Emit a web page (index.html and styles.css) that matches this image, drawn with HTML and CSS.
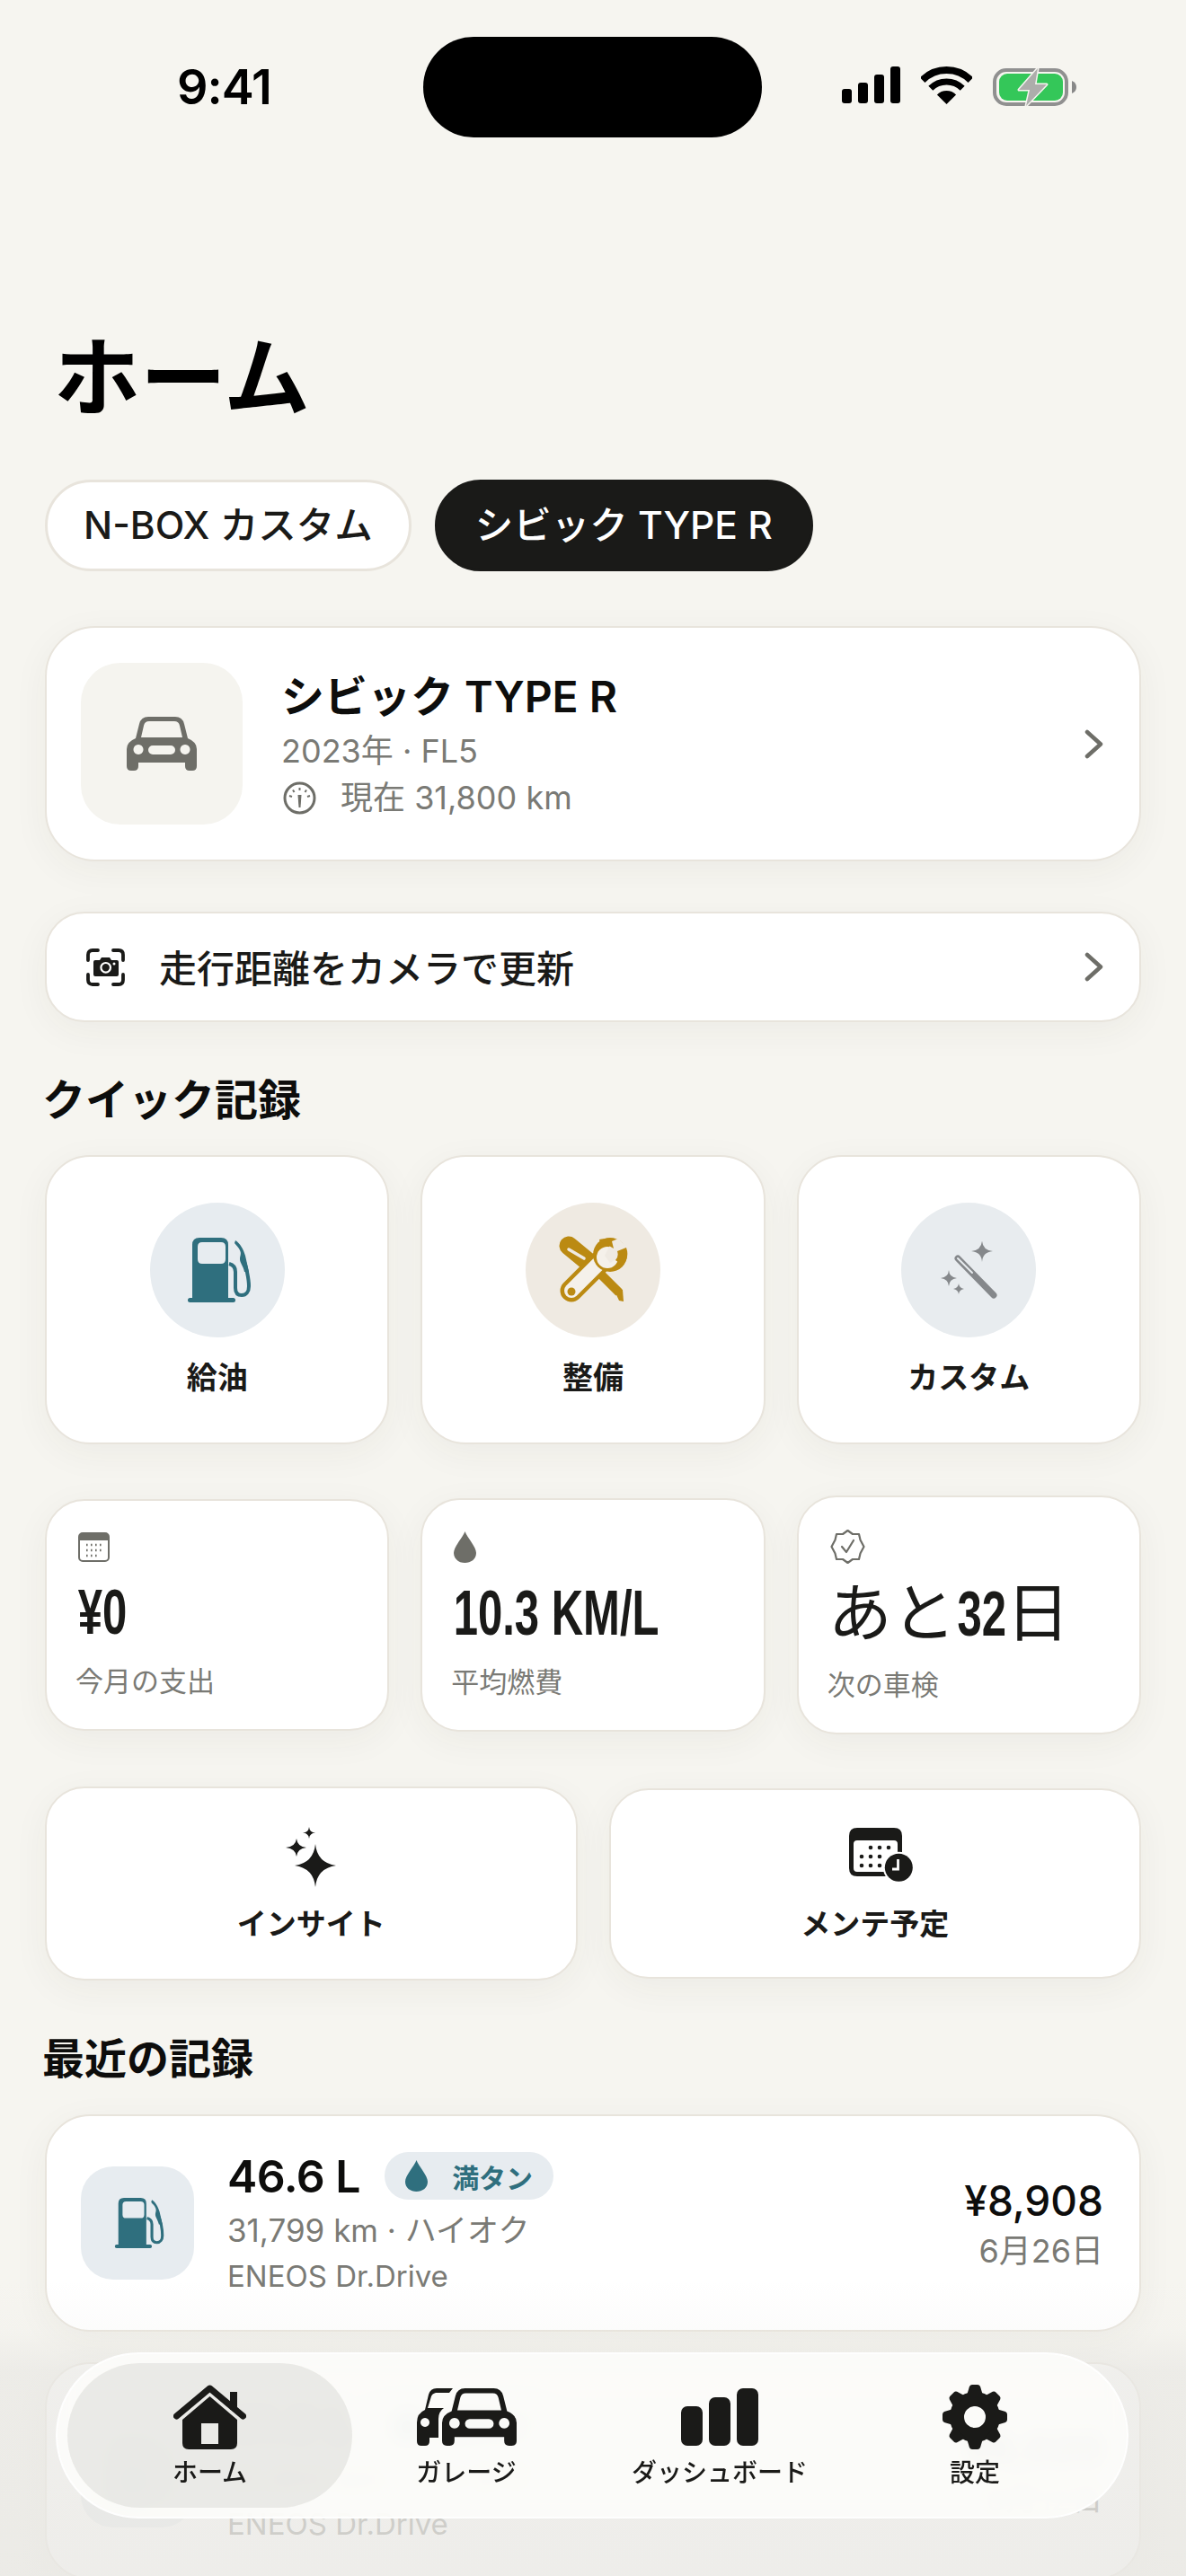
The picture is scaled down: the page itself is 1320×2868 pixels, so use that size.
FILE: index.html
```html
<!DOCTYPE html>
<html lang="ja">
<head>
    <meta charset="UTF-8">
    <meta name="viewport" content="width=device-width, initial-scale=1.0">
    <title>ホーム</title>
    <link rel="stylesheet" href="styles.css">
</head>
<body>
    <svg class="defs" width="0" height="0">
        <symbol id="car" viewBox="0 0 78 60">
            <path fill-rule="evenodd" d="M10 24 L14 8 Q16 0 24 0 H54 Q62 0 64 8 L68 24 Q78 28 78 36 V55 Q78 60 73 60 H70 Q65 60 65 55 V51 H13 V55 Q13 60 8 60 H5 Q0 60 0 55 V36 Q0 28 10 24Z M16 23 H62 L59 10 Q58 5 53 5 H25 Q20 5 19 10Z M13 31 a5.5 5.5 0 1 0 .01 0Z M65 31 a5.5 5.5 0 1 0 .01 0Z M29 32 a4.5 4.5 0 0 0 0 10 H49 a4.5 4.5 0 0 0 0 -10Z"/>
        </symbol>
        <symbol id="pump" viewBox="-6 0 78 72">
            <path fill-rule="evenodd" d="M5 69 V8 Q5 0 13 0 H37 Q45 0 45 8 V69Z M16 5 Q11 5 11 10 V24 Q11 29 16 29 H37 Q42 29 42 24 V10 Q42 5 37 5Z"/>
            <rect y="67" width="53" height="5" rx="2.5"/>
            <path class="pump-hose" d="M46 29 C50 30 53 33 53 38 V56 C53 62 56 64 60 64 C65 64 68 60 68 54 C68 46 65 32 62 24"/>
            <path d="M53 3 C58 6 62 13 64 20 L68 38 L63 38 C62 32 58 28 58 24 C58 20 60 18 58 14 C57 11 54 9 52 6Z"/>
        </symbol>
        <symbol id="chevron" viewBox="0 0 21 33">
            <path d="M3 3 L18 16.5 L3 30" fill="none" stroke="#6e6e68" stroke-width="4.5" stroke-linecap="round" stroke-linejoin="round"/>
        </symbol>
        <symbol id="drop" viewBox="0 0 25 35">
            <path d="M12.5 0 C15 7 25 17 25 24 C25 31 19 35 12.5 35 C6 35 0 31 0 24 C0 17 10 7 12.5 0Z"/>
        </symbol>
    </svg>

    <div class="screen">
        <div class="status-bar">
            <div class="status-time">9:41</div>
            <div class="island"></div>
            <div class="status-icons">
                <svg width="65" height="41" viewBox="0 0 65 41">
                    <rect y="25" width="11" height="16" rx="3"/>
                    <rect x="18" y="18" width="11" height="23" rx="3"/>
                    <rect x="36" y="9" width="11" height="32" rx="3"/>
                    <rect x="54" width="11" height="41" rx="3"/>
                </svg>
                <svg width="57" height="42" viewBox="0 0 57 42">
                    <path d="M1.63 15.13 A38 38 0 0 1 55.37 15.13" fill="none" stroke="#000" stroke-width="8"/>
                    <path d="M10.82 24.32 A25 25 0 0 1 46.18 24.32" fill="none" stroke="#000" stroke-width="7"/>
                    <path d="M17.9 31.4 A15 15 0 0 1 39.1 31.4 L28.5 42Z"/>
                </svg>
                <svg width="93" height="46" viewBox="0 0 93 46">
                    <rect x="2" y="4" width="80" height="38" rx="13" fill="none" stroke="#909090" stroke-width="4"/>
                    <rect x="7" y="8" width="71" height="30" rx="9" fill="#34c759"/>
                    <path d="M88 16 Q93 18 93 23 Q93 28 88 30Z" fill="#888"/>
                    <path d="M50 2 L29 26 H41 L37 44 L60 20 H47Z" fill="#adadab" stroke="#f6f5f0" stroke-width="3" stroke-linejoin="round" paint-order="stroke"/>
                </svg>
            </div>
        </div>

        <h1 class="page-title">ホーム</h1>

        <div class="chips">
            <div class="chip">N-BOX カスタム</div>
            <div class="chip chip-active">シビック TYPE R</div>
        </div>

        <div class="card car-card">
            <div class="car-tile">
                <svg class="car-tile-icon" width="78" height="60"><use href="#car"/></svg>
            </div>
            <div class="car-info">
                <div class="car-name">シビック TYPE R</div>
                <div class="car-sub">2023年 · FL5</div>
                <div class="car-sub car-meter">
                    <svg width="37" height="37" viewBox="0 0 37 37" fill="none" stroke="#6e6e68">
                        <circle cx="18.5" cy="18.5" r="16.5" stroke-width="3"/>
                        <path d="M18.5 7 v3 M11 9.5 l1.5 2.5 M26 9.5 l-1.5 2.5 M7 16 l3 1 M30 16 l-3 1" stroke-width="2"/>
                        <path d="M16.5 15 h4 l-1 14 h-2Z" fill="#6e6e68" stroke="none"/>
                    </svg>
                    <span>現在 31,800 km</span>
                </div>
            </div>
            <svg class="chevron" width="21" height="33"><use href="#chevron"/></svg>
        </div>

        <div class="card camera-row">
            <svg width="43" height="42" viewBox="0 0 43 42" fill="none" stroke="#1a1a18" stroke-width="3.8">
                <path d="M2 13 V7 Q2 2 7 2 H13 M30 2 H36 Q41 2 41 7 V13 M41 29 V35 Q41 40 36 40 H30 M13 40 H7 Q2 40 2 35 V29" stroke-linecap="round"/>
                <path d="M10 13 H15 L17 10 H26 L28 13 H34 Q36 13 36 15 V29 Q36 31 34 31 H10 Q8 31 8 29 V15 Q8 13 10 13Z" fill="#1a1a18" stroke="none"/>
                <circle cx="21.7" cy="21.3" r="5.3" fill="#1a1a18" stroke="#fff" stroke-width="2.2"/>
                <circle cx="31" cy="17" r="1.5" fill="#fff" stroke="none"/>
            </svg>
            <span class="camera-text">走行距離をカメラで更新</span>
            <svg class="chevron" width="21" height="33"><use href="#chevron"/></svg>
        </div>

        <h2 class="section-title section-quick">クイック記録</h2>

        <div class="quick-grid">
            <div class="card quick-card">
                <div class="quick-circle circle-blue">
                    <svg class="icon-teal" width="78" height="72"><use href="#pump"/></svg>
                </div>
                <div class="quick-label">給油</div>
            </div>
            <div class="card quick-card">
                <div class="quick-circle circle-tan">
                    <svg width="78" height="76" viewBox="0 0 78 76">
                        <path d="M12 11 L35 30" stroke="#bb8a12" stroke-width="21" stroke-linecap="round"/>
                        <path d="M12 15 L29 25" stroke="#efeae2" stroke-width="3.5" stroke-linecap="round"/>
                        <path d="M35 30 L68 63" stroke="#bb8a12" stroke-width="10"/>
                        <path d="M61 57 L72 60 L73 73 L68 72Z" fill="#bb8a12"/>
                        <path d="M15 61 L46 30" stroke="#bb8a12" stroke-width="25" stroke-linecap="round"/>
                        <path d="M15 61 L46 30" stroke="#f5f1ea" stroke-width="16" stroke-linecap="round"/>
                        <circle cx="15" cy="62" r="4.5" fill="#bb8a12"/>
                        <circle cx="58" cy="21" r="19" fill="#bb8a12"/>
                        <circle cx="55" cy="24" r="12" fill="#f5f1ea"/>
                        <path d="M52 22 L60 6 L67 3 L78 13 L75 20 L58 30Z" fill="#efeae2"/>
                        <path d="M60 6 Q54 2 46 4 L48 12 Q56 9 62 14Z M76 13 Q80 24 72 33 L64 27 Q68 23 66 17Z" fill="#bb8a12"/>
                    </svg>
                </div>
                <div class="quick-label">整備</div>
            </div>
            <div class="card quick-card">
                <div class="quick-circle circle-grey">
                    <svg width="63" height="64" viewBox="0 0 63 64">
                        <path d="M19 19 L59 60" stroke="#85888b" stroke-width="7" stroke-linecap="round"/>
                        <path d="M19 19 L35 35" stroke="#e8ecef" stroke-width="2" stroke-linecap="round"/>
                        <path d="M46 -1 Q46.5 10 58 11 Q46.5 12 46 23 Q45.5 12 34 11 Q45.5 10 46 -1Z" fill="#85888b"/>
                        <path d="M9 32 Q9.5 40 18 41 Q9.5 42 9 50 Q8.5 42 0 41 Q8.5 40 9 32Z" fill="#85888b"/>
                        <path d="M20 47 Q20.5 52 26 53 Q20.5 54 20 59 Q19.5 54 14 53 Q19.5 52 20 47Z" fill="#85888b"/>
                    </svg>
                </div>
                <div class="quick-label">カスタム</div>
            </div>
        </div>

        <div class="stats-row">
            <div class="card stat-card">
                <svg class="stat-icon" width="35" height="33" viewBox="0 0 35 33">
                    <rect x="1" y="1" width="33" height="31" rx="4" fill="#fff" stroke="#6e6e68" stroke-width="2"/>
                    <path d="M1 5 Q1 1 5 1 H30 Q34 1 34 5 V9 H1Z" fill="#6e6e68"/>
                    <path d="M9 14 h1.6 M14 14 h1.6 M19 14 h1.6 M24 14 h1.6 M9 20 h1.6 M14 20 h1.6 M19 20 h1.6 M24 20 h1.6 M9 26 h1.6 M14 26 h1.6 M19 26 h1.6" stroke="#6e6e68" stroke-width="2.4"/>
                </svg>
                <div class="stat-value"><span class="condensed">¥0</span></div>
                <div class="stat-label">今月の支出</div>
            </div>
            <div class="card stat-card">
                <svg class="stat-icon icon-grey" width="25" height="35"><use href="#drop"/></svg>
                <div class="stat-value"><span class="condensed">10.3 KM/L</span></div>
                <div class="stat-label">平均燃費</div>
            </div>
            <div class="card stat-card stat-tall">
                <svg class="stat-icon" width="39" height="40" viewBox="0 0 39 40" fill="none" stroke="#6e6e68" stroke-width="2.2" stroke-linejoin="round">
                    <path d="M19.5 2 L25 6 L32 6 L33.5 12.5 L37.5 20 L33.5 27.5 L32 34 L25 34 L19.5 38 L14 34 L7 34 L5.5 27.5 L1.5 20 L5.5 12.5 L7 6 L14 6Z"/>
                    <path d="M13 20 L18 26 L26 13" stroke-linecap="round"/>
                </svg>
                <div class="stat-value stat-mixed">あと<span class="condensed condensed-inline">32</span>日</div>
                <div class="stat-label">次の車検</div>
            </div>
        </div>

        <div class="actions-row">
            <div class="card action-card">
                <svg width="56" height="67" viewBox="0 0 56 67" fill="#1a1a18">
                    <path d="M33 19 Q35 40 56 43 Q35 46 33 67 Q31 46 10 43 Q31 40 33 19Z"/>
                    <path d="M12 13 Q13 22 23 23 Q13 24 12 33 Q11 24 0 23 Q11 22 12 13Z"/>
                    <path d="M26 0 Q26.5 6 33 6.5 Q26.5 7 26 13 Q25.5 7 19 6.5 Q25.5 6 26 0Z"/>
                </svg>
                <div class="action-label">インサイト</div>
            </div>
            <div class="card action-card action-short">
                <svg class="action-calendar" width="71" height="60" viewBox="0 0 71 60">
                    <path fill-rule="evenodd" d="M9 0 H50 Q59 0 59 9 V45 Q59 54 50 54 H9 Q0 54 0 45 V9 Q0 0 9 0Z M9 14 Q5 14 5 18 V45 Q5 49 9 49 H50 Q54 49 54 45 V18 Q54 14 50 14Z" fill="#1a1a18"/>
                    <g fill="#1a1a18">
                        <circle cx="24" cy="22" r="2.3"/><circle cx="34" cy="22" r="2.3"/><circle cx="44" cy="22" r="2.3"/>
                        <circle cx="14" cy="32" r="2.3"/><circle cx="24" cy="32" r="2.3"/><circle cx="34" cy="32" r="2.3"/>
                        <circle cx="14" cy="42" r="2.3"/><circle cx="24" cy="42" r="2.3"/><circle cx="34" cy="42" r="2.3"/>
                    </g>
                    <circle cx="55.3" cy="44.3" r="17.5" fill="#fff"/>
                    <circle cx="55.3" cy="44.3" r="15.5" fill="#1a1a18"/>
                    <path d="M54.5 35 V46 H48" fill="none" stroke="#fff" stroke-width="2.8"/>
                </svg>
                <div class="action-label">メンテ予定</div>
            </div>
        </div>

        <h2 class="section-title section-recent">最近の記録</h2>

        <div class="records">
            <div class="card record-card">
                <div class="record-tile">
                    <svg class="icon-teal" width="61" height="56"><use href="#pump"/></svg>
                </div>
                <div class="record-main">
                    <div class="record-top">
                        <span class="record-amount">46.6 L</span>
                        <span class="badge">
                            <svg class="icon-teal" width="25" height="35"><use href="#drop"/></svg>
                            満タン
                        </span>
                    </div>
                    <div class="record-sub">31,799 km · ハイオク</div>
                    <div class="record-place">ENEOS Dr.Drive</div>
                </div>
                <div class="record-right">
                    <div class="record-price">¥8,908</div>
                    <div class="record-date">6月26日</div>
                </div>
            </div>
            <div class="card record-card">
                <div class="record-tile">
                    <svg class="icon-teal" width="61" height="56"><use href="#pump"/></svg>
                </div>
                <div class="record-main">
                    <div class="record-top">
                        <span class="record-amount">41.9 L</span>
                        <span class="badge">
                            <svg class="icon-teal" width="25" height="35"><use href="#drop"/></svg>
                            満タン
                        </span>
                    </div>
                    <div class="record-sub">31,402 km · ハイオク</div>
                    <div class="record-place">ENEOS Dr.Drive</div>
                </div>
                <div class="record-right">
                    <div class="record-price">¥8,020</div>
                    <div class="record-date">6月12日</div>
                </div>
            </div>
        </div>

        <div class="bottom-fade"></div>

        <nav class="tab-bar">
            <div class="tab tab-active">
                <div class="tab-icon">
                    <svg width="81" height="72" viewBox="0 0 81 72" fill="#1a1a18">
                        <path d="M63 8 h8 v20 h-8Z"/>
                        <path fill-rule="evenodd" d="M40.5 13 L71 39 V65 Q71 72 64 72 H17 Q10 72 10 65 V39Z M31 43 V66 H50 V43Z"/>
                        <path d="M3.5 35 L40.5 4 L77.5 35" fill="none" stroke="#1a1a18" stroke-width="7" stroke-linecap="round" stroke-linejoin="round"/>
                    </svg>
                </div>
                <div class="tab-label">ホーム</div>
            </div>
            <div class="tab">
                <div class="tab-icon">
                    <svg class="garage" width="111" height="64" viewBox="0 0 111 64" fill="#1a1a18">
                        <path fill-rule="evenodd" d="M40 0 H22 Q15 0 13 7 L9 24 Q0 28 0 38 V59 Q0 64 5 64 H9 Q14 64 14 59 V55 H24 V34 Q24 26 30 22 H12 L16 9 Q17 6 21 5 H36Z M9 33 a5 5 0 1 0 .01 0Z"/>
                        <use href="#car" x="28" width="83" height="64"/>
                    </svg>
                </div>
                <div class="tab-label">ガレージ</div>
            </div>
            <div class="tab">
                <div class="tab-icon">
                    <svg width="86" height="64" viewBox="0 0 86 64" fill="#1a1a18">
                        <rect y="20" width="24" height="44" rx="7"/>
                        <rect x="31" y="10" width="24" height="54" rx="7"/>
                        <rect x="62" width="24" height="64" rx="7"/>
                    </svg>
                </div>
                <div class="tab-label">ダッシュボード</div>
            </div>
            <div class="tab">
                <div class="tab-icon">
                    <svg width="72" height="72" viewBox="-36 -36 72 72" fill="#1a1a18">
                        <circle r="20" fill="none" stroke="#1a1a18" stroke-width="16"/>
                        <g id="tooth"><path d="M-9 -24 L-6 -34 Q-5 -36 -3 -36 H3 Q5 -36 6 -34 L9 -24Z"/></g>
                        <use href="#tooth" transform="rotate(45)"/>
                        <use href="#tooth" transform="rotate(90)"/>
                        <use href="#tooth" transform="rotate(135)"/>
                        <use href="#tooth" transform="rotate(180)"/>
                        <use href="#tooth" transform="rotate(225)"/>
                        <use href="#tooth" transform="rotate(270)"/>
                        <use href="#tooth" transform="rotate(315)"/>
                    </svg>
                </div>
                <div class="tab-label">設定</div>
            </div>
        </nav>
    </div>
</body>
</html>
```

FILE: styles.css
```css
* {
    box-sizing: border-box;
}
html, body {
    margin: 0;
    padding: 0;
    background-color: #f6f5f0;
}
body {
    font-family: Inter, "Noto Sans CJK JP", sans-serif;
    color: #1a1a18;
}
.defs {
    position: absolute;
}
.screen {
    position: relative;
    width: 1320px;
    height: 2868px;
    padding: 41px 50px 0;
    overflow: hidden;
}

/* status bar */
.status-bar {
    display: grid;
    grid-template-columns: 421px 377px 1fr;
    height: 111px;
    margin-right: -50px;
    margin-left: -50px;
    padding-left: 50px;
}
.status-time {
    padding-left: 147px;
    font-size: 54px;
    font-weight: 600;
    line-height: 112px;
    letter-spacing: -1px;
    color: #000;
}
.island {
    background-color: #000;
    border-radius: 56px;
}
.status-icons {
    display: flex;
    align-items: flex-start;
    gap: 23px;
    padding-top: 33px;
    padding-left: 89px;
}

.page-title {
    margin: 220px 0 0 10px;
    font-size: 96px;
    font-weight: 700;
    line-height: 96px;
    color: #000;
}

/* vehicle chips */
.chips {
    display: flex;
    gap: 26px;
    margin-top: 66px;
}
.chip {
    height: 102px;
    padding: 0 40px;
    border: 3px solid #e8e4dc;
    border-radius: 51px;
    background-color: #fff;
    font-size: 42.5px;
    font-weight: 500;
    line-height: 95px;
    white-space: nowrap;
}
.chip-active {
    padding: 0 42px;
    border-color: #1a1a18;
    background-color: #1a1a18;
    color: #fff;
}

.card {
    border: 2px solid #e8e4dc;
    background-color: #fff;
    box-shadow: 0 10px 40px rgba(60, 55, 40, 0.05);
}
.chevron {
    flex: none;
    margin-left: auto;
}

/* current vehicle */
.car-card {
    display: flex;
    align-items: center;
    gap: 43px;
    height: 262px;
    margin-top: 61px;
    padding: 0 40px 0 38px;
    border-radius: 56px;
}
.car-tile {
    display: flex;
    flex: none;
    align-items: center;
    justify-content: center;
    width: 180px;
    height: 180px;
    border-radius: 44px;
    background-color: #f5f4ef;
}
.car-tile-icon {
    fill: #6e6e68;
}
.car-name {
    font-size: 48px;
    font-weight: 600;
    line-height: 60px;
    color: #0d0d0c;
}
.car-sub {
    margin-top: 8px;
    font-size: 36px;
    line-height: 44px;
    color: #7a7a75;
}
.car-meter {
    display: flex;
    align-items: center;
    gap: 27px;
    padding-left: 2px;
}

.camera-row {
    display: flex;
    align-items: center;
    gap: 38px;
    height: 123px;
    margin-top: 56px;
    padding: 0 40px 0 44px;
    border-radius: 44px;
}
.camera-text {
    margin-top: -3px;
    font-size: 42px;
    font-weight: 500;
}

.section-title {
    margin: 0 0 0 -3px;
    font-size: 48px;
    font-weight: 700;
    line-height: 48px;
    color: #0d0d0c;
}
.section-quick {
    margin-top: 63px;
}
.section-recent {
    margin-top: 63px;
    font-size: 47px;
}

/* quick record */
.quick-grid {
    display: grid;
    grid-template-columns: repeat(3, minmax(0, 1fr));
    gap: 35px;
    margin-top: 37px;
}
.quick-card {
    display: flex;
    flex-direction: column;
    align-items: center;
    height: 322px;
    padding-top: 51px;
    border-radius: 50px;
}
.quick-circle {
    display: flex;
    align-items: center;
    justify-content: center;
    width: 150px;
    height: 150px;
    border-radius: 50%;
}
.circle-blue {
    background-color: #e7ecf0;
}
.circle-tan {
    background-color: #efeae2;
}
.circle-grey {
    background-color: #e8ecef;
}
.quick-label {
    margin-top: 25px;
    font-size: 34px;
    font-weight: 700;
    line-height: 40px;
}
.icon-teal {
    fill: #2f6f7e;
}
.icon-grey {
    fill: #6e6e68;
}
.pump-hose {
    fill: none;
    stroke: #2f6f7e;
    stroke-width: 4;
}

/* stats */
.stats-row {
    display: grid;
    grid-template-columns: repeat(3, minmax(0, 1fr));
    align-items: center;
    gap: 35px;
    margin-top: 57px;
}
.stat-card {
    padding: 35px 20px 33px 32px;
    border-radius: 44px;
}
.stat-icon {
    display: block;
    margin-left: 3px;
}
.stat-value {
    height: 72px;
    margin-top: 18px;
    font-size: 71px;
    line-height: 72px;
    white-space: nowrap;
}
.condensed {
    display: inline-block;
    padding-left: 4px;
    font-family: "Liberation Sans", sans-serif;
    font-weight: 700;
    transform: scaleX(0.69);
    transform-origin: left center;
}
.stat-mixed {
    height: 76px;
    margin-top: 15px;
    padding-left: 1px;
    font-size: 71px;
    font-weight: 400;
    line-height: 76px;
}
.condensed-inline {
    padding-left: 2px;
    margin-right: -25px;
}
.stat-label {
    margin-top: 23px;
    font-size: 31px;
    line-height: 40px;
    color: #7a7a75;
}

/* shortcuts */
.actions-row {
    display: grid;
    grid-template-columns: repeat(2, minmax(0, 1fr));
    align-items: center;
    gap: 35px;
    margin-top: 58px;
}
.action-card {
    display: flex;
    flex-direction: column;
    align-items: center;
    height: 216px;
    padding-top: 43px;
    border-radius: 44px;
}
.action-short {
    height: 212px;
    padding-top: 42px;
}
.action-short .action-label {
    margin-top: 27px;
}
.action-calendar {
    margin-left: 13px;
}
.action-label {
    margin-top: 21px;
    font-size: 33px;
    font-weight: 700;
    line-height: 40px;
}

/* recent records */
.records {
    display: flex;
    flex-direction: column;
    gap: 34px;
    margin-top: 38px;
}
.record-card {
    display: flex;
    flex: none;
    align-items: center;
    gap: 37px;
    height: 242px;
    padding: 0 40px 0 38px;
    border-radius: 50px;
}
.record-tile {
    display: flex;
    flex: none;
    align-items: center;
    justify-content: center;
    width: 126px;
    height: 126px;
    border-radius: 36px;
    background-color: #e7ecf0;
}
.record-top {
    display: flex;
    align-items: center;
    gap: 27px;
    height: 53px;
}
.record-amount {
    font-size: 50px;
    font-weight: 600;
    letter-spacing: -0.5px;
    color: #0d0d0c;
}
.badge {
    display: flex;
    align-items: center;
    gap: 27px;
    height: 53px;
    padding: 0 23px;
    border-radius: 27px;
    background-color: #e7ecf0;
    font-size: 30px;
    font-weight: 700;
    color: #2f6f7e;
}
.record-sub {
    margin-top: 12px;
    font-size: 35px;
    line-height: 44px;
    color: #7a7a75;
}
.record-place {
    margin-top: 9px;
    font-size: 33px;
    line-height: 40px;
    color: #7a7a75;
}
.record-right {
    margin-left: auto;
    text-align: right;
}
.record-price {
    font-size: 46px;
    font-weight: 500;
    line-height: 56px;
    color: #0d0d0c;
}
.record-date {
    margin-top: 6px;
    font-size: 36px;
    line-height: 44px;
    color: #7a7a75;
}

/* lower fade and floating tab bar */
.bottom-fade {
    position: absolute;
    top: 2540px;
    left: 0;
    width: 1320px;
    height: 328px;
    background: linear-gradient(to bottom, rgba(233, 232, 228, 0) 0, rgba(233, 232, 228, 0.15) 56px, rgba(233, 232, 228, 0.7) 100px, rgba(233, 232, 228, 0.78) 100%);
}
.tab-bar {
    position: absolute;
    top: 2619px;
    left: 62px;
    display: grid;
    grid-template-columns: 317px 254px 310px 258px;
    width: 1194px;
    height: 185px;
    padding: 10px 11px;
    border: 2px solid rgba(255, 255, 255, 0.85);
    border-radius: 93px;
    background-color: rgba(253, 253, 250, 0.88);
    -webkit-backdrop-filter: blur(10px);
    backdrop-filter: blur(10px);
}
.tab {
    display: flex;
    flex-direction: column;
    align-items: center;
    padding-top: 24px;
    border-radius: 81px;
}
.tab-active {
    background-color: rgba(226, 226, 222, 0.7);
}
.tab-icon {
    display: flex;
    align-items: center;
    justify-content: center;
    height: 72px;
}
.tab-label {
    margin-top: 9px;
    font-size: 28px;
    font-weight: 500;
    line-height: 34px;
}
```
